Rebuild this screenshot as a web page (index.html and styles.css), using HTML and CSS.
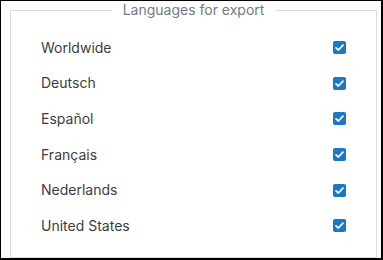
FILE: index.html
```html
<!DOCTYPE html>
<html>
<head>
<meta charset="utf-8">
<link rel="stylesheet" href="styles.css">
</head>
<body>
<div class="frame">
  <fieldset class="group">
    <legend class="group-title">Languages for export</legend>
    <div class="row"><span class="label">Worldwide</span><span class="check"><svg viewBox="0 0 13 13" width="13" height="13"><path d="M3 6.8 L5.4 9 L10 4.2" fill="none" stroke="#fff" stroke-width="1.7" stroke-linecap="round" stroke-linejoin="round"/></svg></span></div>
    <div class="row"><span class="label">Deutsch</span><span class="check"><svg viewBox="0 0 13 13" width="13" height="13"><path d="M3 6.8 L5.4 9 L10 4.2" fill="none" stroke="#fff" stroke-width="1.7" stroke-linecap="round" stroke-linejoin="round"/></svg></span></div>
    <div class="row"><span class="label">Español</span><span class="check"><svg viewBox="0 0 13 13" width="13" height="13"><path d="M3 6.8 L5.4 9 L10 4.2" fill="none" stroke="#fff" stroke-width="1.7" stroke-linecap="round" stroke-linejoin="round"/></svg></span></div>
    <div class="row"><span class="label">Français</span><span class="check"><svg viewBox="0 0 13 13" width="13" height="13"><path d="M3 6.8 L5.4 9 L10 4.2" fill="none" stroke="#fff" stroke-width="1.7" stroke-linecap="round" stroke-linejoin="round"/></svg></span></div>
    <div class="row"><span class="label">Nederlands</span><span class="check"><svg viewBox="0 0 13 13" width="13" height="13"><path d="M3 6.8 L5.4 9 L10 4.2" fill="none" stroke="#fff" stroke-width="1.7" stroke-linecap="round" stroke-linejoin="round"/></svg></span></div>
    <div class="row"><span class="label">United States</span><span class="check"><svg viewBox="0 0 13 13" width="13" height="13"><path d="M3 6.8 L5.4 9 L10 4.2" fill="none" stroke="#fff" stroke-width="1.7" stroke-linecap="round" stroke-linejoin="round"/></svg></span></div>
  </fieldset>
</div>
</body>
</html>
```
FILE: styles.css
```css
html, body {
  margin: 0;
  padding: 0;
  background: #fff;
}
.frame {
  box-sizing: border-box;
  width: 383px;
  height: 260px;
  border-style: solid;
  border-color: #000;
  border-width: 1px 2px 2px 1px;
  padding: 0 0 0 9px;
  font-family: Inter, "Liberation Sans", sans-serif;
  overflow: hidden;
}
.group {
  box-sizing: border-box;
  width: 367px;
  margin: 0;
  border: 1px solid #dcdcdc;
  padding: 11px 30px 13px 30px;
  min-width: 0;
}
.group-title {
  margin: 0 auto;
  padding: 0 12px;
  font-size: 14px;
  line-height: 18px;
  color: #737b84;
}
.row {
  display: flex;
  align-items: center;
  justify-content: space-between;
  height: 35.6px;
}
.label {
  font-size: 14px;
  line-height: 18px;
  color: #3d3d3d;
}
.check {
  display: flex;
  width: 13px;
  height: 13px;
  background: #1d78c4;
  border-radius: 2px;
  margin-right: 0.5px;
}
.check svg {
  display: block;
}
```
